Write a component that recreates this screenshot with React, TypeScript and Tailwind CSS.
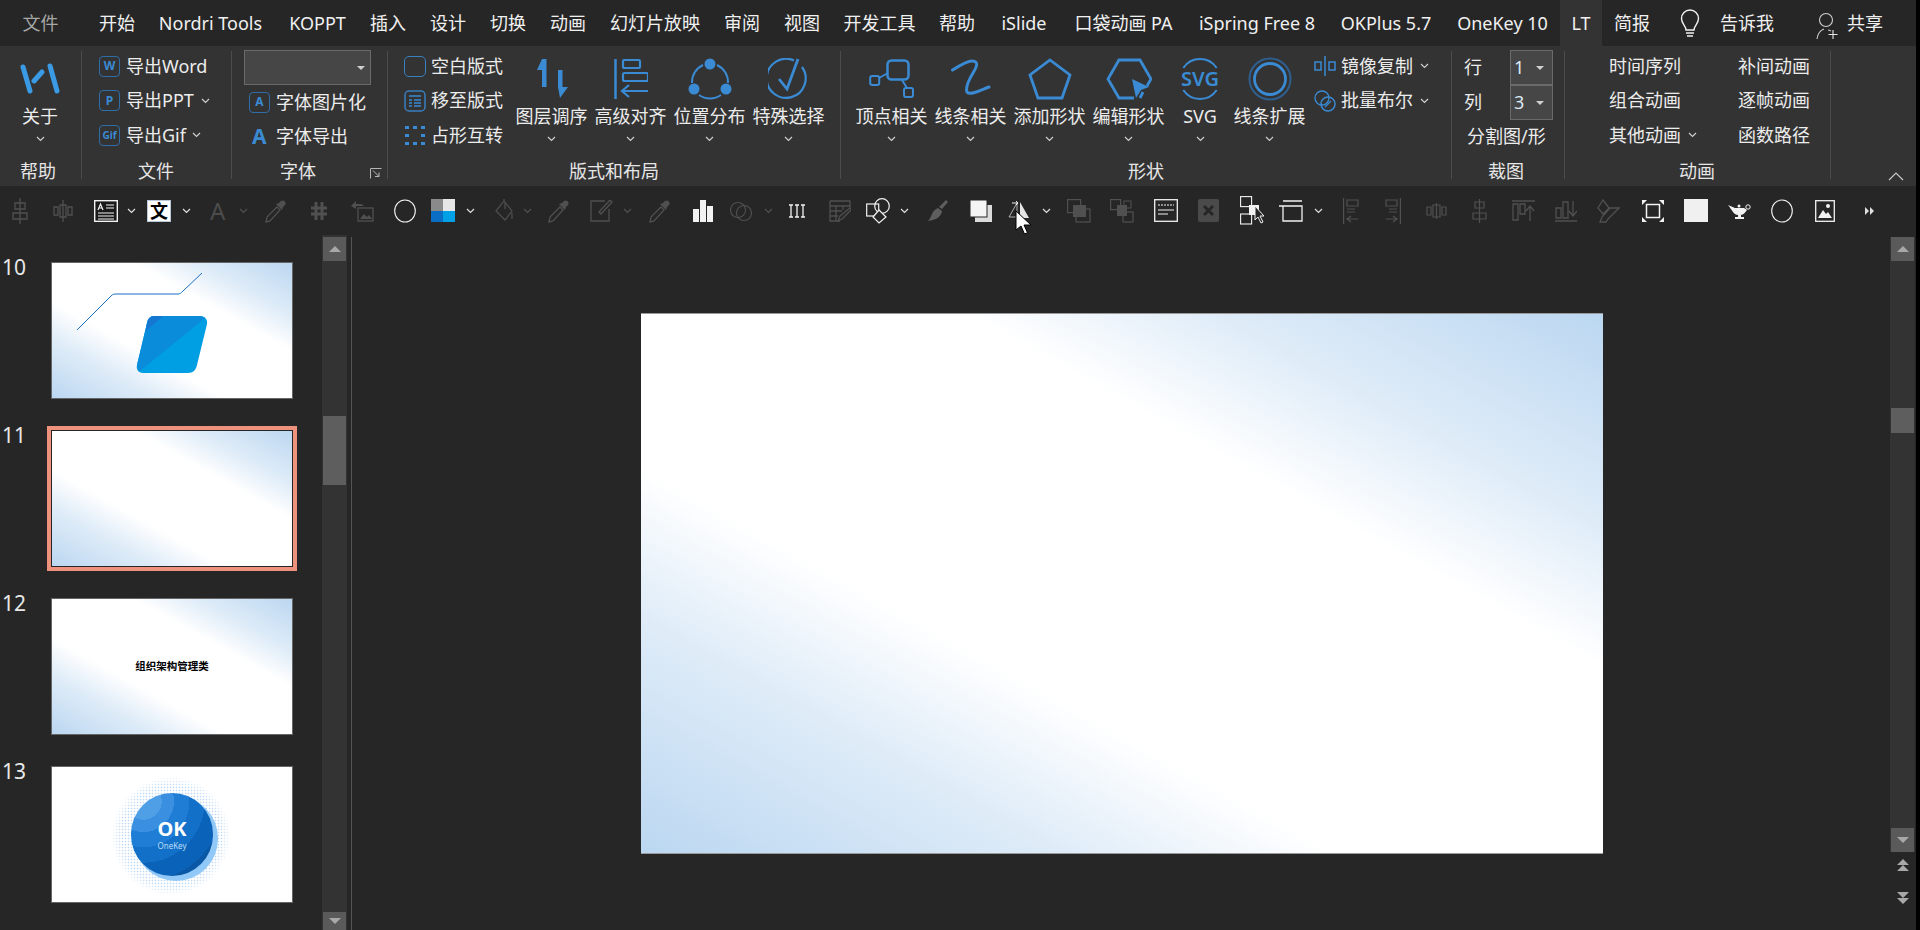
import React from "react";

const FONT = "font-['Noto_Sans','Noto_Sans_CJK_SC',sans-serif]";
const BLUE = "#3a8bd4";
const DIM = "#505050";
const WH = "#f2f2f2";

const Chev = ({ className = "", c = "#cfcfcf" }: { className?: string; c?: string }) => (
  <svg width="9" height="6" viewBox="0 0 9 6" className={"shrink-0 " + className}>
    <path d="M1 1l3.5 3.5L8 1" fill="none" stroke={c} strokeWidth="1.2" />
  </svg>
);

const Ic = ({ w = 24, h = 24, vb = "0 0 24 24", className = "", children }: { w?: number; h?: number; vb?: string; className?: string; children: React.ReactNode }) => (
  <svg width={w} height={h} viewBox={vb} fill="none" className={"shrink-0 " + className}>
    {children}
  </svg>
);

const Sep = ({ className = "" }: { className?: string }) => <div className={"w-px h-[128px] mt-[5px] bg-[#4c4c4c] shrink-0 " + className} />;

const GroupLabel = ({ children, className = "" }: { children: React.ReactNode; className?: string }) => (
  <div className={"absolute top-[111px] text-[18px] leading-[28px] text-[#e6e6e6] whitespace-nowrap " + className}>{children}</div>
);

const Big = ({ icon, label, className = "" }: { icon: React.ReactNode; label: string; className?: string }) => (
  <div className={"flex flex-col items-center shrink-0 " + className}>
    <div className="h-[41px] mt-[12px] flex items-center justify-center">{icon}</div>
    <div className="text-[18px] leading-[24px] mt-[5px] text-[#ececec] whitespace-nowrap">{label}</div>
    <Chev className="mt-[8px]" />
  </div>
);

const Row = ({ icon, label, chev, className = "" }: { icon?: React.ReactNode; label: string; chev?: string; className?: string }) => (
  <div className={"flex items-center h-[34.5px] whitespace-nowrap text-[18px] text-[#ececec] " + className}>
    {icon}
    <span>{label}</span>
    {chev ? <Chev className={chev} /> : null}
  </div>
);

const Badge = ({ t, small }: { t: string; small?: boolean }) => (
  <div className={"w-[21px] h-[21px] rounded-[4px] border-[1.5px] border-[#2f6da6] text-[#3a8bd4] flex items-center justify-center font-bold leading-none mr-[6px] shrink-0 " + (small ? "text-[10px]" : "text-[12px]")}>{t}</div>
);

const tabs: [string, string][] = [
  ["文件", "w-[81px] text-[#a6a6a6]"],
  ["开始", "w-[60px] ml-[6px]"],
  ["Nordri Tools", "w-[133px] ml-[-3px]"],
  ["KOPPT", "w-[81px]"],
  ["插入", "w-[60px]"],
  ["设计", "w-[60px]"],
  ["切换", "w-[60px]"],
  ["动画", "w-[60px]"],
  ["幻灯片放映", "w-[114px]"],
  ["审阅", "w-[60px]"],
  ["视图", "w-[60px]"],
  ["开发工具", "w-[95px]"],
  ["帮助", "w-[60px]"],
  ["iSlide", "w-[74px]"],
  ["口袋动画 PA", "w-[125px]"],
  ["iSpring Free 8", "w-[142px]"],
  ["OKPlus 5.7", "w-[116px]"],
  ["OneKey 10", "w-[117px]"],
];

const gradient =
  "bg-white bg-[linear-gradient(29deg,transparent_67%,#dfecf8_80%,#bbd7f1_100%),linear-gradient(209deg,transparent_64%,#dfecf8_78%,#bbd7f1_100%)]";

const Thumb = ({ n, active, children }: { n: number; active?: boolean; children?: React.ReactNode }) => (
  <div className="flex h-[168px] shrink-0">
    <div className="w-[47px] pl-[2px] text-[21px] leading-[24px] mt-[-7px] text-[#e8e8e8]">{n}</div>
    <div className={active ? "w-[250px] h-[145px] mt-[-4px] border-[4px] border-[#ee917d] shrink-0" : "w-[250px] h-[137px] px-[4px] shrink-0"}>
      <div className={"relative overflow-hidden w-[242px] h-[137px] border " + (active ? "border-[#262626]" : "border-[#666666]") + " " + gradient}>{children}</div>
    </div>
  </div>
);

const ScrollBtn = ({ up, className = "" }: { up?: boolean; className?: string }) => (
  <div className={"h-[24px] w-[23px] mx-auto bg-[#5a5a5a] flex items-center justify-center shrink-0 " + className}>
    <svg width="12" height="6" viewBox="0 0 12 6">
      <path d={up ? "M0 6h12L6 0z" : "M0 0h12L6 6z"} fill="#a8a8a8" />
    </svg>
  </div>
);

const Dropper = ({ className = "" }: { className?: string }) => (
  <Ic w={22} h={24} vb="0 0 22 24" className={className}>
    <path d="M1 23l1-5L12 8l3 3L5 22z" stroke={DIM} strokeWidth="1.300" />
    <path d="M11 5l6 6 1-3 2-2c2-2-1-6-4-4l-2 2z" fill={DIM} />
  </Ic>
);

export default function App() {
  return (
    <div className={"w-[1920px] h-[930px] overflow-hidden bg-black " + FONT}>
      <div className="w-[1916px] h-[930px] bg-[#262626] text-white relative">
        {/* title tabs */}
        <div className="h-[46px] flex items-center text-[18px] text-[#f0f0f0] whitespace-nowrap bg-[#262626]">
          {tabs.map(([t, c]) => (
            <div key={t} className={"text-center shrink-0 " + c}>{t}</div>
          ))}
          <div className="h-[46px] w-[42px] ml-[-1px] bg-[#333333] flex items-center justify-center shrink-0">LT</div>
          <div className="w-[60px] text-center shrink-0">简报</div>
          <Ic w={20} h={30} vb="0 0 20 30" className="ml-[18px]">
            <path d="M6 22c0-4-4.500-6-4.500-11.500a8.500 8.500 0 0 1 17 0C18.500 16 14 18 14 22z" stroke={WH} strokeWidth="1.400" />
            <path d="M6 25h8M7 28h6" stroke={WH} strokeWidth="1.600" />
          </Ic>
          <div className="ml-[20px] shrink-0">告诉我</div>
          <Ic w={23} h={28} vb="0 0 23 28" className="ml-[42px] mt-[5px]">
            <circle cx="10" cy="8" r="6.500" stroke="#cfcfcf" strokeWidth="1.100" />
            <path d="M1 27c1-7 4-9 7-10M12 18c1 0 2 .5 3 1" stroke="#cfcfcf" strokeWidth="1.100" />
            <path d="M17 18v9M12.500 22.500h9" stroke="#e6e6e6" strokeWidth="1.100" />
          </Ic>
          <div className="ml-[8px] shrink-0">共享</div>
        </div>

        {/* ribbon */}
        <div className="relative h-[140px] bg-[#333333] flex text-[18px]">
          {/* 帮助 */}
          <div className="relative w-[81px] shrink-0 flex flex-col items-center pr-[1px]">
            <Big
              label="关于"
              icon={
                <Ic w={40} h={32} vb="0 0 40 32">
                  <path d="M3 4l7 24M37 28L30 3M14 18l8-9" stroke="#3a9ae4" strokeWidth="5" strokeLinecap="round" />
                </Ic>
              }
            />
            <GroupLabel className="left-[20px]">帮助</GroupLabel>
          </div>
          <Sep />
          {/* 文件 */}
          <div className="relative w-[149px] shrink-0 pl-[17px] pt-[3px]">
            <Row icon={<Badge t="W" />} label="导出Word" />
            <Row icon={<Badge t="P" />} label="导出PPT" chev="ml-[7px]" />
            <Row icon={<Badge t="Gif" small />} label="导出Gif" chev="ml-[6px]" />
            <GroupLabel className="left-[56px]">文件</GroupLabel>
          </div>
          <Sep />
          {/* 字体 */}
          <div className="relative w-[155px] shrink-0 pl-[12px] pt-[4px]">
            <div className="w-[127px] h-[35px] bg-[#464646] border border-[#6a6a6a] flex items-center justify-end pr-[5px]">
              <svg width="8" height="4" viewBox="0 0 8 4"><path d="M0 0h8L4 4z" fill="#d0d0d0" /></svg>
            </div>
            <Row className="pl-[5px]" icon={<Badge t="A" />} label="字体图片化" />
            <Row
              className="pl-[8px]"
              icon={<div className="w-[18px] mr-[6px] text-[21px] font-bold text-[#3a8bd4] leading-none shrink-0">A</div>}
              label="字体导出"
            />
            <GroupLabel className="left-[48px]">字体</GroupLabel>
            <Ic w={12} h={11} vb="0 0 12 11" className="absolute left-[138px] top-[122px]">
              <path d="M.5 10.500V.5h11" stroke="#b5b5b5" />
              <path d="M3 2.500l6 6M5 8.500h4v-4" stroke="#b5b5b5" />
            </Ic>
          </div>
          <Sep />
          {/* 版式和布局 */}
          <div className="relative w-[452px] shrink-0 flex">
            <div className="w-[124px] pl-[16px] pt-[3px] shrink-0">
              <Row label="空白版式" icon={<div className="w-[22px] h-[21px] rounded-[5px] border-[1.5px] border-[#3a7fc0] mr-[5px]" />} />
              <Row
                label="移至版式"
                icon={
                  <Ic w={22} h={22} vb="0 0 22 22" className="mr-[5px]">
                    <rect x="1" y="1" width="20" height="20" rx="4" stroke="#3a7fc0" strokeWidth="1.500" />
                    <path d="M5 6h12M5 10h3M10 10h7M5 13h3M10 13h7M5 16h3M10 16h7" stroke="#3a8bd4" strokeWidth="1.500" />
                  </Ic>
                }
              />
              <Row
                label="占形互转"
                icon={
                  <Ic w={22} h={22} vb="0 0 22 22" className="mr-[5px]">
                    <path d="M1 2h4v3H1zM9 2h4v3H9zM17 2h4v3h-4zM1 10h4v3H1zM17 10h4v3h-4zM1 18h4v3H1zM9 18h4v3H9zM17 18h4v3h-4z" fill="#3a8bd4" />
                  </Ic>
                }
              />
            </div>
            <Big
              className="w-[79px]"
              label="图层调序"
              icon={
                <Ic w={32} h={40} vb="0 0 32 40">
                  <path d="M6 0h4.500v28H6V11H1zM22 11h4.500v17H32L24 39l-2-11z" fill={BLUE} />
                </Ic>
              }
            />
            <Big
              className="w-[79px]"
              label="高级对齐"
              icon={
                <Ic w={34} h={40} vb="0 0 34 40">
                  <path d="M1.500 0v40" stroke={BLUE} strokeWidth="2.500" />
                  <rect x="9" y="1" width="17" height="8" rx="1.500" stroke={BLUE} strokeWidth="2.200" />
                  <rect x="9" y="14" width="25" height="8" rx="1.500" stroke={BLUE} strokeWidth="2.200" />
                  <path d="M34 32H9M15 26l-7 6 7 6" stroke={BLUE} strokeWidth="2.200" />
                </Ic>
              }
            />
            <Big
              className="w-[79px]"
              label="位置分布"
              icon={
                <Ic w={44} h={42} vb="0 0 44 42">
                  <path d="M15 7A19 19 0 0 0 4 25M29 7a19 19 0 0 1 11 18M11 37a19 19 0 0 0 22 0" stroke={BLUE} strokeWidth="2" />
                  <circle cx="22" cy="6" r="5.500" fill={BLUE} />
                  <circle cx="6" cy="31" r="5.500" fill={BLUE} />
                  <circle cx="38" cy="31" r="5.500" fill={BLUE} />
                </Ic>
              }
            />
            <Big
              className="w-[79px]"
              label="特殊选择"
              icon={
                <Ic w={42} h={42} vb="0 0 42 42">
                  <path d="M34 9A19.500 19.500 0 1 1 26 2.500" stroke={BLUE} strokeWidth="2.200" />
                  <path d="M11 21l8 10L30 1" stroke={BLUE} strokeWidth="2.800" />
                </Ic>
              }
            />
            <GroupLabel className="left-[181px]">版式和布局</GroupLabel>
          </div>
          <Sep />
          {/* 形状 */}
          <div className="relative w-[610px] shrink-0 flex pl-[11px]">
            <Big
              className="w-[79px]"
              label="顶点相关"
              icon={
                <Ic w={46} h={40} vb="0 0 46 40">
                  <rect x="18.500" y="1.500" width="21" height="19" rx="4" stroke={BLUE} strokeWidth="2.500" />
                  <rect x="1.200" y="17" width="9" height="9" rx="2" stroke={BLUE} strokeWidth="2" />
                  <rect x="35" y="29" width="9" height="9" rx="2" stroke={BLUE} strokeWidth="2" />
                  <path d="M10 19l9-5M33 21l5 8" stroke={BLUE} strokeWidth="2" />
                </Ic>
              }
            />
            <Big
              className="w-[79px]"
              label="线条相关"
              icon={
                <Ic w={40} h={40} vb="0 0 40 40">
                  <path d="M1.500 11C8 7 16 2 21 2c8 0 4 7 1 12s-8 14-6 19c3 4 14-2 22-5" stroke={BLUE} strokeWidth="3" strokeLinecap="round" />
                </Ic>
              }
            />
            <Big
              className="w-[79px]"
              label="添加形状"
              icon={
                <Ic w={44} h={42} vb="0 0 44 42">
                  <path d="M22 2l20 15-8 23H10L2 17z" stroke={BLUE} strokeWidth="2.800" />
                </Ic>
              }
            />
            <Big
              className="w-[79px]"
              label="编辑形状"
              icon={
                <Ic w={46} h={42} vb="0 0 46 42">
                  <path d="M28 40H13L2 21 13 2h21l11 19-4 7M37 34l-3 6" stroke={BLUE} strokeWidth="2.800" />
                  <path d="M26 21l4 19 5-8 8-3z" fill={BLUE} />
                </Ic>
              }
            />
            <Big
              className="w-[64px]"
              label="SVG"
              icon={
                <div className="relative w-[40px] h-[42px] flex items-center justify-center">
                  <Ic w={40} h={42} vb="0 0 40 42" className="absolute left-0 top-0">
                    <path d="M3.300 10A20 20 0 0 1 36.700 10M3.300 32a20 20 0 0 0 33.400 0" stroke={BLUE} strokeWidth="2" />
                  </Ic>
                  <span className="text-[20px] font-semibold leading-none text-[#3a8bd4]">SVG</span>
                </div>
              }
            />
            <Big
              className="w-[79px] ml-[-2px]"
              label="线条扩展"
              icon={
                <Ic w={44} h={44} vb="0 0 44 44">
                  <circle cx="22" cy="22" r="20.500" stroke="#2f5f8e" strokeWidth="2" />
                  <circle cx="22" cy="22" r="15.500" stroke={BLUE} strokeWidth="2.800" />
                </Ic>
              }
            />
            <div className="pl-[5px] pt-[3px] shrink-0">
              <Row
                label="镜像复制"
                chev="ml-[7px]"
                icon={
                  <Ic w={22} h={20} vb="0 0 22 20" className="mr-[5px]">
                    <path d="M11 0v20" stroke={BLUE} strokeWidth="1.500" />
                    <rect x="1" y="6" width="6" height="8" stroke={BLUE} strokeWidth="1.500" />
                    <rect x="15" y="6" width="6" height="8" stroke={BLUE} strokeWidth="1.500" />
                  </Ic>
                }
              />
              <Row
                label="批量布尔"
                chev="ml-[7px]"
                icon={
                  <Ic w={22} h={22} vb="0 0 22 22" className="mr-[5px]">
                    <circle cx="8" cy="8" r="7" stroke={BLUE} strokeWidth="1.300" />
                    <circle cx="14" cy="14" r="7" stroke={BLUE} strokeWidth="1.500" />
                    <path d="M11 17l6-6" stroke={BLUE} strokeWidth="1.300" />
                  </Ic>
                }
              />
            </div>
            <GroupLabel className="left-[287px]">形状</GroupLabel>
          </div>
          <Sep />
          {/* 裁图 */}
          <div className="relative w-[112px] shrink-0 pt-[4px]">
            <div className="flex items-center h-[35px]">
              <span className="ml-[12px] w-[46px] text-[#ececec]">行</span>
              <div className="w-[43px] h-[35px] bg-[#464646] border border-[#6a6a6a] flex items-center justify-between pl-[3px] pr-[8px] text-[#dce9f5]">
                <span>1</span>
                <svg width="8" height="4" viewBox="0 0 8 4"><path d="M0 0h8L4 4z" fill="#d0d0d0" /></svg>
              </div>
            </div>
            <div className="flex items-center h-[35px]">
              <span className="ml-[12px] w-[46px] text-[#ececec]">列</span>
              <div className="w-[43px] h-[35px] bg-[#464646] border border-[#6a6a6a] flex items-center justify-between pl-[3px] pr-[8px] text-[#dce9f5]">
                <span>3</span>
                <svg width="8" height="4" viewBox="0 0 8 4"><path d="M0 0h8L4 4z" fill="#d0d0d0" /></svg>
              </div>
            </div>
            <div className="h-[33px] flex items-center pl-[15px] text-[#ececec] whitespace-nowrap">分割图/形</div>
            <GroupLabel className="left-[36px]">裁图</GroupLabel>
          </div>
          <Sep />
          {/* 动画 */}
          <div className="relative w-[265px] shrink-0 pt-[3px] flex">
            <div className="pl-[44px] w-[173px] shrink-0">
              <Row label="时间序列" />
              <Row label="组合动画" />
              <Row label="其他动画" chev="ml-[7px]" />
            </div>
            <div className="shrink-0">
              <Row label="补间动画" />
              <Row label="逐帧动画" />
              <Row label="函数路径" />
            </div>
            <GroupLabel className="left-[114px]">动画</GroupLabel>
          </div>
          <Sep />
          <Ic w={16} h={9} vb="0 0 16 9" className="absolute left-[1888px] top-[126px]">
            <path d="M1 8l7-7 7 7" stroke="#c8c8c8" strokeWidth="1.200" />
          </Ic>
        </div>

        {/* quick access toolbar */}
        <div className="h-[49px] flex items-center">
          <Ic w={16} h={26} vb="0 0 16 26" className="ml-[12px]"><path d="M8 0v26M3 5h10v6H3zM1 15h14v6H1z" stroke={DIM} strokeWidth="1.300" /></Ic>
          <Ic w={20} h={22} vb="0 0 20 22" className="ml-[25px]"><path d="M10 0v22M7 5h6v12H7zM1 7h4v8H1zM15 7h4v8h-4z" stroke={DIM} strokeWidth="1.300" /></Ic>
          <Ic w={24} h={22} vb="0 0 24 22" className="ml-[21px]">
            <rect x=".7" y=".7" width="22.600" height="20.600" fill="#1a1a1a" stroke={WH} strokeWidth="1.400" />
            <path d="M4 10l2.500-6L9 10M5 8h3M12 5h8M12 8h8M4 13h16M4 16h16M4 19h16" stroke={WH} strokeWidth="1.200" />
          </Ic>
          <Chev className="ml-[9px]" c="#e0e0e0" />
          <div className="ml-[11px] w-[24px] h-[22px] bg-white border border-[#b8c8d8] flex items-center justify-center text-[18px] font-bold text-black leading-none shrink-0">文</div>
          <Chev className="ml-[11px]" c="#e0e0e0" />
          <div className="ml-[19px] w-[17px] text-[24px] leading-none text-[#4c4c4c] shrink-0">A</div>
          <Chev className="ml-[12px]" c={DIM} />
          <Dropper className="ml-[17px]" />
          <Ic w={18} h={22} vb="0 0 18 22" className="ml-[23px]"><path d="M6 2v18M12 2v18M1 8h16M1 14h16" stroke={DIM} strokeWidth="3" /></Ic>
          <Ic w={24} h={22} vb="0 0 24 22" className="ml-[22px]">
            <path d="M1 6l5-5v3h5a7 7 0 0 1 3 2H6v3z" fill={DIM} /><rect x="8" y="8" width="15" height="13" stroke={DIM} strokeWidth="1.300" /><path d="M10 19l4-5 3 3 2-2 3 4z" fill={DIM} />
          </Ic>
          <Ic w={22} h={24} vb="0 0 22 24" className="ml-[20px]"><ellipse cx="11" cy="12" rx="10.300" ry="11" stroke={WH} strokeWidth="1.100" /></Ic>
          <div className="ml-[15px] w-[24px] h-[23px] grid grid-cols-2 grid-rows-2 shrink-0">
            <div className="bg-[#8a8a8a]" /><div className="bg-[#e6e6e6]" /><div className="bg-[#0a6fc4]" /><div className="bg-[#00a0e6]" />
          </div>
          <Chev className="ml-[11px]" c="#e0e0e0" />
          <Ic w={20} h={24} vb="0 0 20 24" className="ml-[20px]"><path d="M9 2l8 10-7 9-9-9zM9 2V0M10 10V3M17 14v6" stroke={DIM} strokeWidth="1.200" /></Ic>
          <Chev className="ml-[8px]" c={DIM} />
          <Dropper className="ml-[16px]" />
          <Ic w={23} h={22} vb="0 0 23 22" className="ml-[20px]"><path d="M15 1H1v20h18V9M9 12l2 2 11-12-2-2z" stroke={DIM} strokeWidth="1.300" /></Ic>
          <Chev className="ml-[10px]" c={DIM} />
          <Dropper className="ml-[17px]" />
          <Ic w={20} h={22} vb="0 0 20 22" className="ml-[22px]"><path d="M0 9h6v13H0zM7 0h6v22H7zM14 6h6v16h-6z" fill={WH} /></Ic>
          <Ic w={22} h={22} vb="0 0 22 22" className="ml-[17px]"><circle cx="8" cy="10" r="7.500" stroke={DIM} strokeWidth="1.100" /><circle cx="14" cy="13" r="7.500" stroke={DIM} strokeWidth="1.100" /></Ic>
          <Chev className="ml-[12px]" c={DIM} />
          <Ic w={18} h={14} vb="0 0 18 14" className="ml-[15px]">
            <path d="M3 1v12M9 1v12M15 1v12" stroke={WH} strokeWidth="1.300" />
            <path d="M1 1h4M7 1h4M13 1h4M1 13h4M7 13h4M13 13h4" stroke={WH} strokeWidth="1.600" />
          </Ic>
          <Ic w={22} h={22} vb="0 0 22 22" className="ml-[23px]"><path d="M1 1h20v8M1 1v20h10M1 6h20M1 11h12M1 16h8M7 6v15M14 6v4M9 21l2-5 10-8 1 2-9 9z" stroke={DIM} strokeWidth="1.300" /></Ic>
          <Ic w={24} h={26} vb="0 0 24 26" className="ml-[15px]">
            <rect x=".7" y="6" width="12" height="12" stroke={WH} strokeWidth="1.200" /><circle cx="16" cy="8" r="7.300" stroke={WH} strokeWidth="1.200" /><path d="M13 12l7 7-7 6-6-6z" stroke={WH} strokeWidth="1.200" fill="#262626" />
          </Ic>
          <Chev className="ml-[10px]" c="#e0e0e0" />
          <Ic w={23} h={24} vb="0 0 23 24" className="ml-[17px]"><path d="M20 1l2 2-6 7-3-2zM12 9l4 3c-1 6-6 9-14 10 3-3 3-6 5-9 1-2 3-3 5-4z" fill="#5e5e5e" /></Ic>
          <Ic w={22} h={22} vb="0 0 22 22" className="ml-[21px]"><rect x="5" y="5" width="17" height="17" fill="#dcdcdc" /><rect x="0" y="0" width="17" height="17" fill="#f4f4f4" stroke="#262626" /></Ic>
          <Ic w={25} h={24} vb="0 0 25 24" className="ml-[14px]">
            <path d="M11 4L3 18h8z" stroke="#cfcfcf" strokeWidth="0.800" /><path d="M14 3l9 16H14z" fill="#e6e6e6" /><path d="M6 4h6M10 2l2 2-2 2" stroke="#f0f0f0" />
          </Ic>
          <Chev className="ml-[11px]" c="#e0e0e0" />
          <Ic w={24} h={24} vb="0 0 24 24" className="ml-[16px]"><rect x=".6" y=".6" width="13" height="13" stroke={DIM} strokeWidth="1.200" /><rect x="9" y="10" width="14" height="13" stroke={DIM} strokeWidth="1.200" /><rect x="6" y="6" width="13" height="12" fill={DIM} /></Ic>
          <Ic w={24} h={24} vb="0 0 24 24" className="ml-[19px]"><rect x=".6" y=".6" width="10" height="10" stroke={DIM} strokeWidth="1.200" /><rect x="13" y="13" width="10" height="10" stroke={DIM} strokeWidth="1.200" /><rect x="7" y="6" width="10" height="11" fill={DIM} /><rect x="14" y="2" width="7" height="7" stroke={DIM} /></Ic>
          <Ic w={24} h={23} vb="0 0 24 23" className="ml-[20px]"><rect x=".7" y=".7" width="22.600" height="21.600" stroke={WH} strokeWidth="1.300" /><path d="M4 6h16" stroke={WH} strokeWidth="1" strokeDasharray="2 1" /><path d="M4 11h16M4 15h10" stroke={WH} strokeWidth="1.200" /></Ic>
          <Ic w={21} h={23} vb="0 0 21 23" className="ml-[20px]"><rect width="21" height="23" rx="2" fill="#4a4a4a" /><path d="M6 7l9 9M15 7l-9 9" stroke="#262626" strokeWidth="3" /></Ic>
          <Ic w={25} h={29} vb="0 0 25 29" className="ml-[21px]">
            <rect x=".6" y=".6" width="11" height="10" stroke={WH} strokeWidth="1.100" /><rect x=".6" y="18" width="11" height="10" stroke={WH} strokeWidth="1.100" /><rect x="9" y="9" width="10" height="10" fill={WH} /><path d="M15 10v14l3-3 3 6 2-1-3-6h4z" fill="#262626" stroke={WH} />
          </Ic>
          <Ic w={24} h={24} vb="0 0 24 24" className="ml-[14px]"><path d="M0 7h23v15H4V7M4 2h19" stroke={WH} strokeWidth="1.300" /></Ic>
          <Chev className="ml-[11px]" c="#e0e0e0" />
          <Ic w={17} h={26} vb="0 0 17 26" className="ml-[20px]"><path d="M.6 0v26M4 2h11v6H4zM4 11h8M4 14h8M15 21H4M8 18l-4 3 4 3" stroke={DIM} strokeWidth="1.200" /></Ic>
          <Ic w={17} h={26} vb="0 0 17 26" className="ml-[24px]"><path d="M16.400 0v26M2 2h11v6H2zM5 11h8M5 14h8M2 21h11M9 18l4 3-4 3" stroke={DIM} strokeWidth="1.200" /></Ic>
          <Ic w={21} h={16} vb="0 0 21 16" className="ml-[25px]"><path d="M10.500 0v16M7 2h7v12H7zM1 4h4v8H1zM16 4h4v8h-4z" stroke={DIM} strokeWidth="1.200" /></Ic>
          <Ic w={15} h={24} vb="0 0 15 24" className="ml-[25px]"><path d="M7.500 0v24M3 3h9v6H3zM1 14h13v6H1z" stroke={DIM} strokeWidth="1.200" /></Ic>
          <Ic w={23} h={22} vb="0 0 23 22" className="ml-[25px]"><path d="M0 1h23M1 4h5v16H1zM8 4h5v10H8zM18 21V6M14 11l4-5 4 5" stroke={DIM} strokeWidth="1.300" /></Ic>
          <Ic w={22} h={22} vb="0 0 22 22" className="ml-[20px]"><path d="M0 21h22M1 8h5v10H1zM8 2h5v16H8zM18 1v15M14 11l4 5 4-5" stroke={DIM} strokeWidth="1.300" /></Ic>
          <Ic w={24} h={24} vb="0 0 24 24" className="ml-[20px]"><path d="M6 1l6 8-6 6-5-6zM22 9L11 20l-2 3H3l2-5 8-9z" stroke={DIM} strokeWidth="1.300" /></Ic>
          <Ic w={22} h={22} vb="0 0 22 22" className="ml-[21px]"><rect x="4.500" y="4.500" width="13" height="13" stroke={WH} strokeWidth="1.500" /><path d="M0 5V0h5zM22 5V0h-5zM0 17v5h5zM22 17v5h-5z" fill={WH} /></Ic>
          <div className="ml-[20px] w-[24px] h-[23px] bg-[#f0f0f0] shrink-0" />
          <Ic w={23} h={16} vb="0 0 23 16" className="ml-[20px]">
            <circle cx="20" cy="4" r="2.200" stroke={WH} strokeWidth="1" />
            <path d="M0 2l7 3h9l3 2c-2 3-4 5-7 5h-2C6 12 4 7 0 2z" fill={WH} />
            <circle cx="11" cy="3" r="1.500" fill={WH} />
            <path d="M10 12h3v2h3v2H7v-2h3z" fill={WH} />
          </Ic>
          <Ic w={22} h={24} vb="0 0 22 24" className="ml-[20px]"><ellipse cx="11" cy="12" rx="10.300" ry="11" stroke={WH} strokeWidth="1.100" /></Ic>
          <Ic w={20} h={22} vb="0 0 20 22" className="ml-[22px]"><rect x=".7" y=".7" width="18.600" height="20.600" stroke={WH} strokeWidth="1.300" /><path d="M3 18l5-8 3 4 2-2 4 6z" fill={WH} /><circle cx="13" cy="6" r="2" fill={WH} /></Ic>
          <Ic w={9} h={8} vb="0 0 9 8" className="ml-[30px]"><path d="M0 0l4 4-4 4zM5 0l4 4-4 4z" fill="#e0e0e0" /></Ic>
        </div>

        {/* main */}
        <div className="flex h-[695px]">
          {/* thumbnails */}
          <div className="w-[322px] shrink-0 pt-[27px] flex flex-col overflow-hidden">
            <Thumb n={10}>
              <Ic w={242} h={137} vb="0 0 242 137" className="absolute left-[-1px] top-[-1px]">
                <path d="M26 68L60 34c2-2 3-2 6-2h61c2 0 3-1 5-3l19-18" stroke="#1a6fc4" strokeWidth="1" />
                <path d="M103 54h46c5 0 8 4 7 8l-10 41c-1 5-4 8-9 8H92c-5 0-7-4-6-8l10-42c1-4 3-7 7-7z" fill="#009fe3" />
                <path d="M103 54h46c2 0 4 1 5 2L89 109c-2-1-3-3-3-6l10-42c1-4 3-7 7-7z" fill="#0a8cdb" />
                <path d="M103 54h9L95 69l1-8c1-4 3-7 7-7z" fill="#1677d2" />
              </Ic>
            </Thumb>
            <Thumb n={11} active />
            <Thumb n={12}>
              <div className="h-full flex items-center justify-center text-[10.5px] font-bold text-black mb-[1px]">组织架构管理类</div>
            </Thumb>
            <div className="flex h-[168px] shrink-0">
              <div className="w-[47px] pl-[2px] text-[21px] leading-[24px] mt-[-7px] text-[#e8e8e8]">13</div>
              <div className="w-[250px] px-[4px]">
                <div className="relative overflow-hidden w-[242px] h-[137px] border border-[#666666] bg-white">
                  <div className="absolute left-[60px] top-[10px] w-[118px] h-[118px] rounded-full bg-[radial-gradient(#bcd8f2_0.7px,transparent_1.1px)] bg-[size:3px_3px] [mask-image:radial-gradient(circle,black_60%,transparent_72%)]" />
                  <div className="absolute left-[82px] top-[29px] w-[84px] h-[85px] rounded-full bg-[#90c8f8]" />
                  <div className="absolute left-[79px] top-[26px] w-[82px] h-[83px] rounded-full bg-[radial-gradient(circle_at_15%_10%,#4e9fe6_0_18%,#3a8fe0_18%_30%,#1f7dd6_30%_45%,#1270c8_45%_60%,#0a63b8_60%_78%,#0a58a5_78%)] flex flex-col items-center justify-center text-white">
                    <div className="text-[20px] font-bold leading-[20px]">OK</div>
                    <div className="text-[8px] leading-[10px] mt-[2px] text-[#bcdcf6]">OneKey</div>
                  </div>
                </div>
              </div>
            </div>
          </div>
          {/* left scrollbar */}
          <div className="w-[25px] shrink-0 bg-[#333333] pt-[2px] flex flex-col justify-between relative">
            <ScrollBtn up />
            <div className="absolute top-[181px] left-[1px] w-[23px] h-[69px] bg-[#5e5e5e]" />
            <div className="h-[18px] w-[23px] mx-auto bg-[#5a5a5a] flex items-center justify-center">
              <svg width="12" height="6" viewBox="0 0 12 6"><path d="M0 0h12L6 6z" fill="#a8a8a8" /></svg>
            </div>
          </div>
          <div className="w-px ml-[4px] mt-[2px] bg-[#555555] shrink-0" />
          {/* canvas */}
          <div className="flex-1 pt-[78px] pl-[289px] min-w-0">
            <div className={"w-[962px] h-[541px] border-t border-[#9a9a9a] border-b " + gradient} />
          </div>
          {/* right scrollbar */}
          <div className="w-[25px] mr-[1px] shrink-0 flex flex-col mt-[2px]">
            <div className="h-[615px] bg-[#333333] flex flex-col justify-between relative">
              <ScrollBtn up />
              <div className="absolute top-[171px] left-[1px] w-[23px] h-[25px] bg-[#5e5e5e]" />
              <ScrollBtn />
            </div>
            <div className="flex flex-col items-center mt-[7px] gap-[21px]">
              <Ic w={12} h={12} vb="0 0 12 12"><path d="M6 0l6 6H0zM6 6l6 6H0z" fill="#a8a8a8" /></Ic>
              <Ic w={12} h={12} vb="0 0 12 12"><path d="M0 0h12L6 6zM0 6h12l-6 6z" fill="#a8a8a8" /></Ic>
            </div>
          </div>
        </div>

        {/* mouse pointer */}
        <Ic w={18} h={25} vb="0 0 18 25" className="absolute left-[1015px] top-[210px]">
          <path d="M1 1v19l5-4 3.500 8 3-1.300L9 15h7z" fill="#fff" stroke="#000" strokeWidth="1" />
        </Ic>
      </div>
    </div>
  );
}
